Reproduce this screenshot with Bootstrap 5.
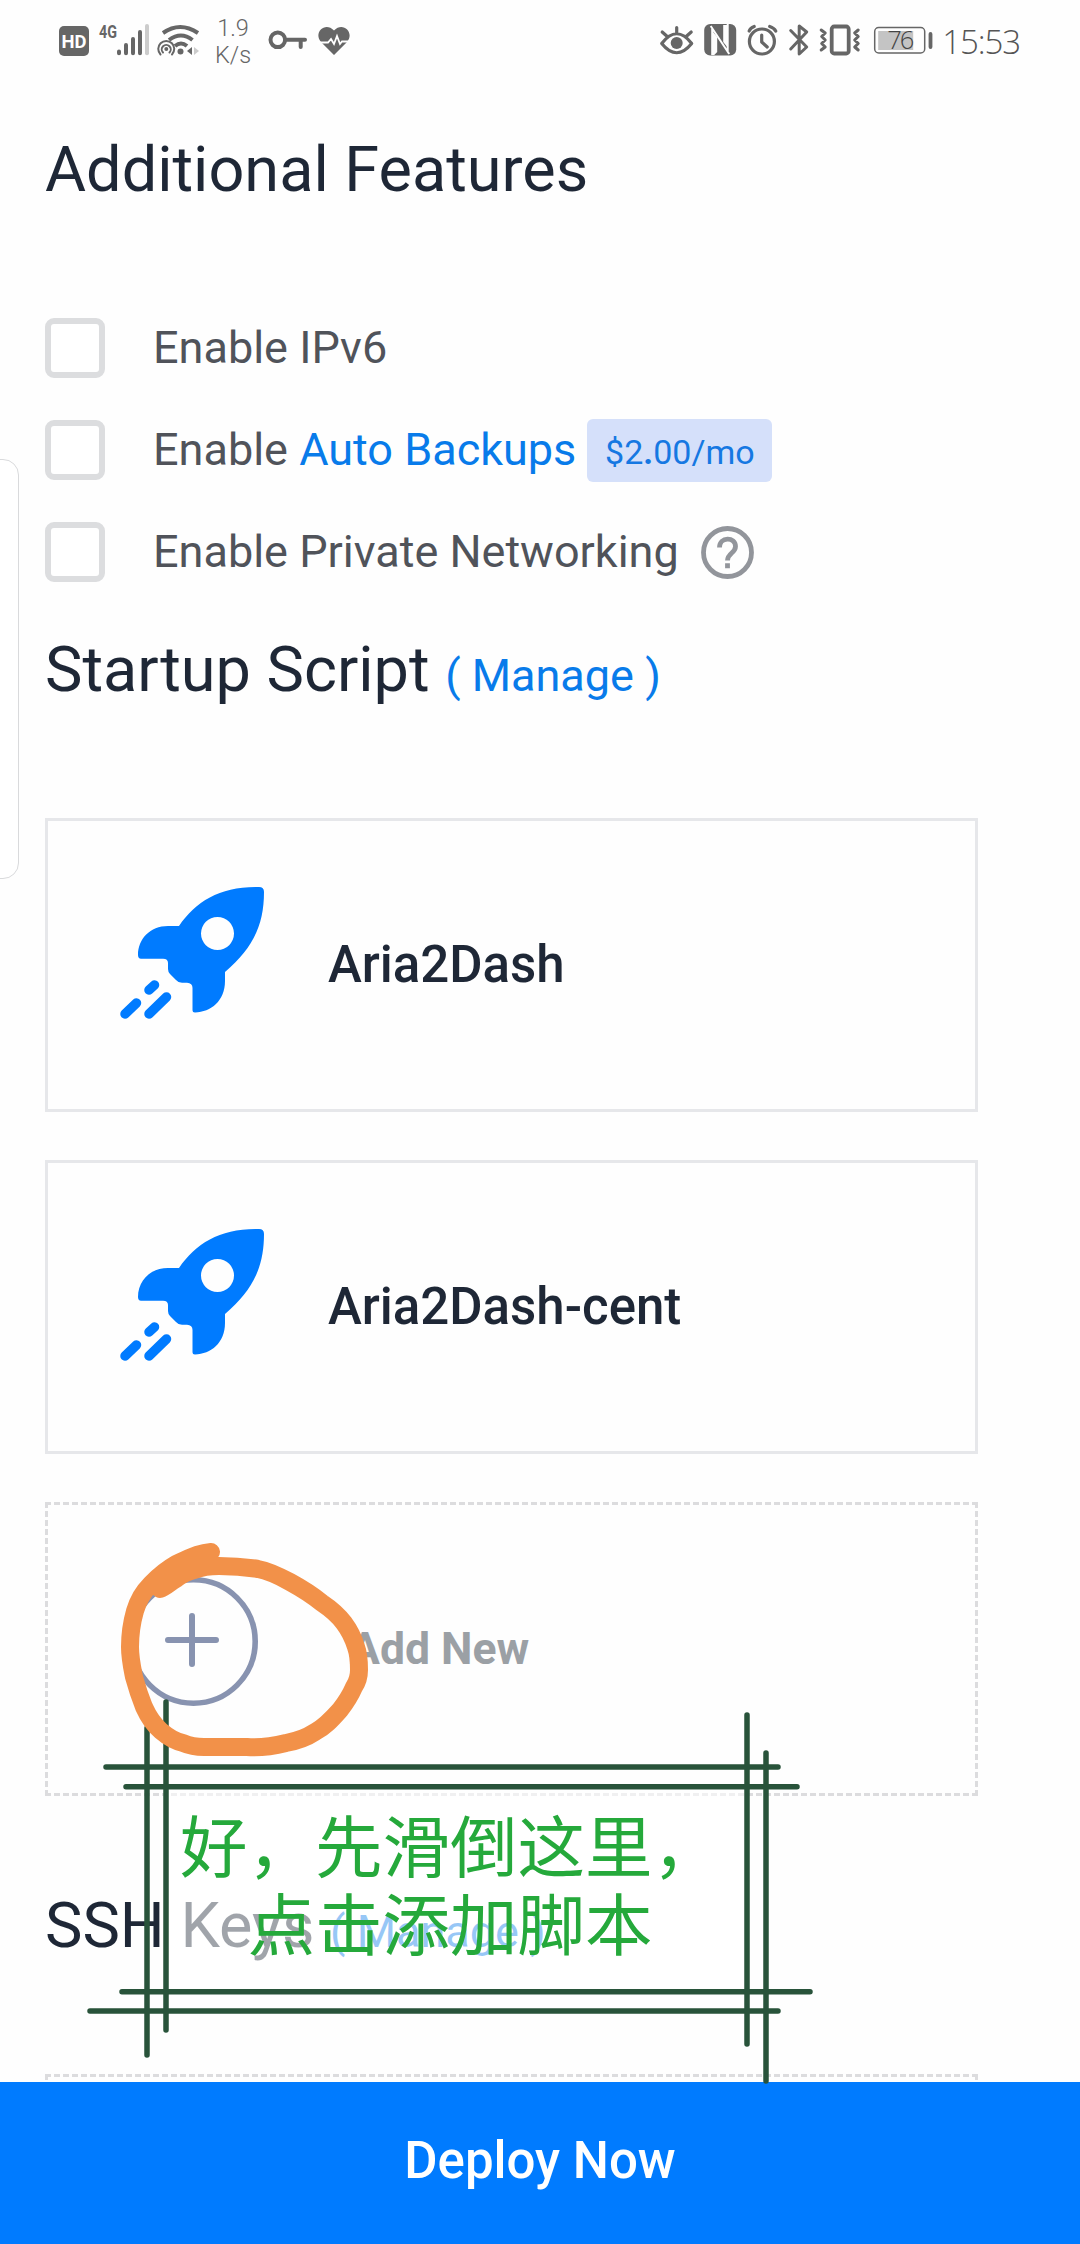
<!DOCTYPE html>
<html lang="en">
<head>
<meta charset="utf-8">
<meta name="viewport" content="width=device-width, initial-scale=1">
<title>Deploy</title>
<link rel="stylesheet" href="https://cdn.jsdelivr.net/npm/bootstrap@5.3.0/dist/css/bootstrap.min.css">
<style>
body{width:1080px;height:2244px;overflow:hidden;background:#fefefe;font-family:Roboto,"Liberation Sans",sans-serif;color:#50535a}
a{color:#087bea;text-decoration:none}
.screen{height:2244px}
.statusbar{height:84px;padding:0 60px 0 59px;color:#666}
.statusbar svg{height:84px;display:block;flex:none}
.speed{font-size:23.5px;line-height:27px;font-weight:300;width:36px;margin-left:-2px;margin-right:2px}
.clock{font-family:"Open Sans","Noto Sans",sans-serif;font-weight:300;font-size:33px;line-height:80px;letter-spacing:-1.1px;color:#555}
.content{padding:48px 102px 0 45px;height:1998px;overflow:hidden}
.title{font-size:63px;line-height:76px;height:76px;font-weight:400;color:#1e2736;margin-bottom:110px;white-space:nowrap}
.title a{font-size:45px;line-height:1}
.options{gap:42px;margin-bottom:50px}
.option{height:60px;font-size:45px;line-height:60px;white-space:nowrap}
.option .form-check-input{width:60px;height:60px;border:6px solid #dcdddf;border-radius:9px;margin:0 48px 0 0;background-color:#fff;flex:none}
.price{font-size:34px;line-height:66px;height:63px;width:185px;border-radius:6px;background:#d5e0fa;color:#1678e2;margin-left:11px}
.help{margin-left:22px}
.scripts{gap:48px;margin-bottom:92px}
.tile{height:294px;border:3px solid #e6e7ea;border-radius:0;background:transparent;font-size:51px;font-weight:500;color:#1e2736;white-space:nowrap}
.tile-dashed{border:3px dashed #dcdcde;font-size:44.5px;font-weight:700;color:#9ba0a5}
.deploy{height:162px;background:#007bff;color:#fff;font-size:51px;font-weight:500;border:0;border-radius:0;padding:0 0 4px}
.drawer{left:-20px;top:459px;width:39px;height:420px;border:1.5px solid #d9dadc;border-radius:16px;background:#fff}
.note{left:169px;top:1789px;width:575px;height:200px;background:rgba(255,255,255,.58)}
.note-text{left:145px;top:1804px;width:610px;font-family:"Noto Sans CJK SC",sans-serif;font-size:67.5px;line-height:78px;color:#25a93b;text-align:center;font-weight:400}
.ink{left:0;top:0;pointer-events:none}
</style>
<script src="https://cdn.jsdelivr.net/npm/bootstrap@5.3.0/dist/js/bootstrap.bundle.min.js"></script>
</head>
<body>
<svg width="0" height="0" class="position-absolute"><defs>
<symbol id="rocket" viewBox="48 821 280 288">
<path fill="#007bff" fill-rule="evenodd" d="M179 926C196 901 221 886 259 887Q264 887 264 892C264 925 253 948 225 972V981C225 1001 211 1012 195 1012.500Q192.500 1012.500 192.500 1010V988Q192.500 983 187 982.700H182Q178 982.700 176 980L170 974Q168 972 168 969V963Q168 958.700 163 958.700H141Q138 958.700 138 955C138 939 150 926 168 926ZM217.500 917A16.500 16.500 0 1 0 217.500 950A16.500 16.500 0 1 0 217.500 917Z"/>
<path stroke="#007bff" stroke-width="9.500" stroke-linecap="round" d="M125 1014L136.500 1003M149 990L154.500 985M149 1014L166.500 997"/>
</symbol></defs></svg>
<div class="screen d-flex flex-column position-relative">
<header class="statusbar d-flex align-items-center justify-content-between">
 <div class="d-flex align-items-center">
  <svg width="158" viewBox="59 0 158 84" fill="none" stroke="#666" stroke-linecap="round">
   <rect x="59" y="26" width="30" height="30" rx="5" fill="#666" stroke="none"/>
   <text x="74" y="47.500" text-anchor="middle" font-family="Roboto" font-weight="700" font-size="18.500" textLength="25" lengthAdjust="spacingAndGlyphs" fill="#fff" stroke="none">HD</text>
   <text x="99" y="38" font-family="Roboto" font-weight="700" font-size="18" textLength="18" lengthAdjust="spacingAndGlyphs" fill="#666" stroke="none">4G</text>
   <path stroke-width="4" d="M119 51.500V53.200M126 45V53.200M133 39V53.200M140 32V53.200"/><path stroke="#ccc" stroke-width="4" d="M147 26V53.200"/>
   <path stroke-width="4" stroke-linecap="butt" d="M163 33Q180 21 198 33M169 40Q181 31 192.500 40M175 46Q181 41 187 46"/>
   <circle cx="180.500" cy="51.500" r="3" fill="#666" stroke="none"/>
   <path stroke-width="2" d="M160.500 54.500A8 8 0 1 1 172 54.500M163 52.500A4.500 4.500 0 1 1 169.500 52.500"/><circle cx="166.300" cy="49" r="2" fill="#666" stroke="none"/>
   <path fill="#666" stroke="none" d="M192 47V55L187 51Z"/><path fill="#ccc" stroke="none" d="M194 47V55L199 51Z"/>
  </svg>
  <div class="speed text-center">1.9<br>K/s</div>
  <svg width="97" viewBox="253 0 97 84" fill="none" stroke="#666">
   <circle cx="277.800" cy="39.800" r="7.300" stroke-width="4"/><path stroke-width="4" stroke-linecap="round" stroke-linejoin="round" d="M286 39.800H305M300.700 40V47"/>
   <path fill="#666" stroke="none" d="M334 55L321 42C313 33 325 21 334 30.500C343 21 355 33 347 42Z"/>
   <path stroke="#fff" stroke-width="1.800" d="M317 42.500H328L331 39L334 44L337 36L340 44L342 41.500H351"/>
  </svg>
 </div>
 <div class="d-flex align-items-center">
  <svg width="283" viewBox="657.800 0 283 84" fill="none" stroke="#666" stroke-width="3.200" stroke-linecap="round" stroke-linejoin="round">
   <path d="M660.500 43.500Q675.500 24 690.500 43.500Q675.500 62 660.500 43.500ZM675.500 33V27.500M665.500 36L661 32M685.500 36L690 32"/><circle cx="675.500" cy="43" r="6" fill="#666" stroke="none"/>
   <rect x="703" y="24" width="32" height="31.500" rx="6" fill="#666" stroke="none"/><path stroke="#fefefe" stroke-width="2" stroke-linecap="butt" d="M711 29V55M709.500 26L728 54M726.500 51V24"/><path fill="#fefefe" stroke="none" d="M711 31L716 37V52L713 55H711ZM722 25H726V47L722 42Z"/>
   <circle cx="760.700" cy="41.500" r="12.500"/><path d="M760.500 35V42L766 47M748 31Q749 28 753 26.500M768.500 26.500Q773 28 774.500 31"/>
   <path stroke-width="3" d="M789.500 30.500L805.500 47L798 54V26L805.500 32L789.500 49"/>
   <rect x="830.500" y="26.500" width="17" height="27" rx="2.500" stroke-width="3.800"/><path stroke-width="3" d="M820 30L824 33L820.500 36.500L824 40L820.500 43.500L824 47L820 50M857 30L853.500 33L857 36.500L853.500 40L857 43.500L853.500 47L857 50"/>
   <rect x="873.500" y="27.500" width="50" height="25.500" rx="4" stroke-width="1.500"/><rect x="877" y="31" width="35" height="19" fill="#c4c4c4" stroke="none"/><path stroke-width="3.800" d="M929.300 34V47"/>
   <text x="886" y="49" font-family="Open Sans,Noto Sans" font-weight="300" font-size="25.500" textLength="27" fill="#444" stroke="none">76</text>
  </svg>
  <div class="clock">15:53</div>
 </div>
</header>
<main class="content">
 <h2 class="title">Additional Features</h2>
 <div class="options d-flex flex-column">
  <label class="option d-flex align-items-center"><input class="form-check-input" type="checkbox">Enable IPv6</label>
  <label class="option d-flex align-items-center"><input class="form-check-input" type="checkbox"><span>Enable <a href="#">Auto Backups</a></span><span class="price text-center">$2<b>.</b>00/mo</span></label>
  <label class="option d-flex align-items-center"><input class="form-check-input" type="checkbox">Enable Private Networking
   <svg class="help" width="53" height="53" viewBox="0 0 53 53" fill="none" stroke="#92959b" stroke-width="4.800"><circle cx="26.500" cy="26.500" r="24"/><path d="M18.500 21.500C18.500 10.500 34.500 10.500 34.500 20.500C34.500 27 26.500 27 26.500 34.500M26.500 37.300V42.300"/></svg></label>
 </div>
 <h2 class="title">Startup Script <a href="#">( Manage )</a></h2>
 <div class="scripts d-flex flex-column">
  <div class="card tile flex-row align-items-center"><svg width="280" height="288"><use href="#rocket"/></svg>Aria2Dash</div>
  <div class="card tile flex-row align-items-center"><svg width="280" height="288"><use href="#rocket"/></svg>Aria2Dash-cent</div>
  <div class="card tile tile-dashed flex-row align-items-center"><svg width="302" height="288" viewBox="48 1505 302 288" fill="none" stroke="#8893b0" stroke-width="5.600" stroke-linecap="round"><circle cx="193.500" cy="1641.500" r="61.700"/><path stroke-width="6" d="M168 1640H216M192 1616V1664"/></svg>Add New</div>
 </div>
 <h2 class="title">SSH Keys <a href="#">( Manage )</a></h2>
 <div class="card tile tile-dashed"></div>
</main>
<button class="deploy btn w-100">Deploy Now</button>
<div class="drawer position-absolute"></div>
<div class="note position-absolute"></div>
<svg class="ink position-absolute" width="1080" height="2244" fill="none" stroke-linecap="round" stroke-linejoin="round">
 <path stroke="#28533a" stroke-width="5.500" d="M147 1728V2055M166 1702V2030M747 1715V2044M766 1753V2081M106 1767H778M126 1786.700H797M122 1991.700H810M90 2011H778"/>
 <path stroke="#f29149" stroke-width="18" d="M211 1552C198 1553 190 1558 176 1564C162 1572 156 1579 150 1585C142 1593 138 1601 135 1611C131 1625 130 1637 130 1647C130 1658 132 1667 134 1677C137 1688 140 1697 144 1707C149 1718 154 1725 161 1731C168 1737 174 1741 183 1743C190 1746 197 1747 204 1747H247C260 1748 274 1746 286 1743C297 1741 306 1738 315 1732C325 1727 332 1719 340 1710C347 1701 351 1694 354 1687C358 1681 359 1676 359 1670C359 1662 359 1655 356 1647C353 1637 350 1631 344 1623C338 1615 331 1609 322 1603C311 1594 301 1588 290 1582C279 1576 269 1571 258 1569C245 1567 232 1566 219 1566C210 1566 202 1567 194 1570C186 1572 181 1575 176 1579C169 1583 166 1587 160 1589L176 1572L205 1558"/>
</svg>
<div class="note-text position-absolute">好，先滑倒这里，<br>点击添加脚本</div>
</div>
</body>
</html>
